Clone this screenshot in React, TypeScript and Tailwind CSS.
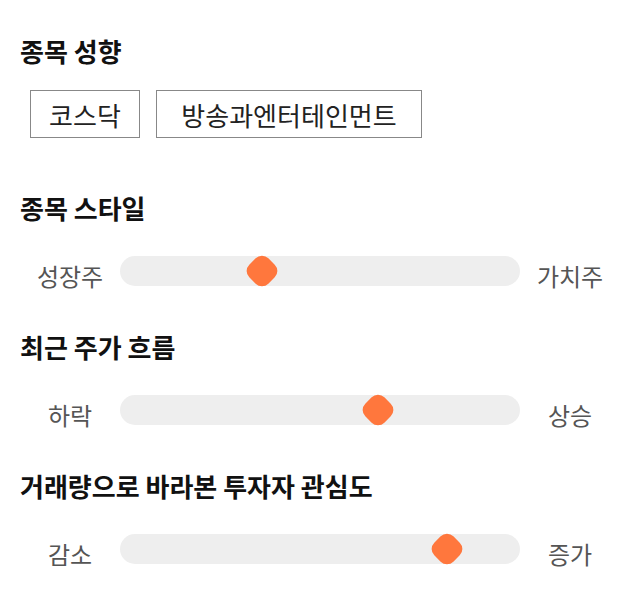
import React from 'react';

const font = { fontFamily: '"Noto Sans CJK KR", "Noto Sans", sans-serif' };

const sliders = [
  { title: '종목 스타일', left: '성장주', right: '가치주', value: 0.355 },
  { title: '최근 주가 흐름', left: '하락', right: '상승', value: 0.645 },
  { title: '거래량으로 바라본 투자자 관심도', left: '감소', right: '증가', value: 0.8175 },
];

function Heading({ children }: { children: React.ReactNode }) {
  return <h2 className="text-[26px] font-bold leading-[36px] text-[#111]">{children}</h2>;
}

function Slider({ left, right, value }: { left: string; right: string; value: number }) {
  return (
    <div className="mt-[30px] flex h-[30px] items-center">
      <span className="w-[100px] pt-[10px] text-center text-[24px] leading-[30px] text-[#555]">{left}</span>
      <div className="relative h-[30px] flex-1 rounded-full bg-[#eeeeee]">
        <div
          className="absolute top-1/2 h-[27px] w-[27px] -translate-x-1/2 -translate-y-1/2 rotate-45 rounded-[9px] bg-[#ff773d]"
          style={{ left: `${value * 100}%` }}
        />
      </div>
      <span className="w-[100px] pt-[10px] text-center text-[24px] leading-[30px] text-[#555]">{right}</span>
    </div>
  );
}

export default function App() {
  return (
    <div className="h-[606px] w-[640px] bg-white px-5 pt-[33px]" style={font}>
      <Heading>종목 성향</Heading>
      <div className="ml-[10px] mt-[21px] flex gap-4">
        <span className="flex h-[48px] w-[110px] items-center justify-center border border-[#888] text-[26px] text-[#222]">
          코스닥
        </span>
        <span className="flex h-[48px] w-[266px] items-center justify-center border border-[#888] text-[26px] text-[#222]">
          방송과엔터테인먼트
        </span>
      </div>

      {sliders.map((s, i) => (
        <div key={s.title} className={i === 0 ? 'mt-[52px]' : 'mt-[43px]'}>
          <Heading>{s.title}</Heading>
          <Slider left={s.left} right={s.right} value={s.value} />
        </div>
      ))}
    </div>
  );
}
